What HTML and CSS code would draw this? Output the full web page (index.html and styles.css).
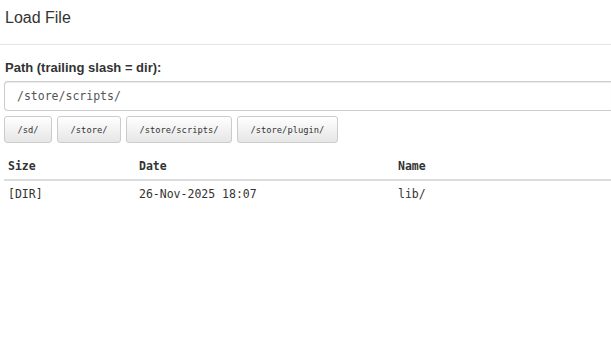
FILE: index.html
```html
<!DOCTYPE html>
<html>
<head>
  <title>Load File</title>
  <link rel="stylesheet" href="styles.css">
</head>
<body>
  <div class="modal">
    <div class="modal-header">
      <h4 class="modal-title">Load File</h4>
    </div>

    <div class="modal-body">
      <label for="filePath" class="path-label">Path (trailing slash = dir):</label>
      <input type="text" id="filePath" class="path-input" value="/store/scripts/">

      <div class="shortcuts">
        <button type="button" class="shortcut">/sd/</button>
        <button type="button" class="shortcut">/store/</button>
        <button type="button" class="shortcut">/store/scripts/</button>
        <button type="button" class="shortcut">/store/plugin/</button>
      </div>

      <table class="file-table">
        <thead>
          <tr>
            <th class="col-size">Size</th>
            <th class="col-date">Date</th>
            <th>Name</th>
          </tr>
        </thead>
        <tbody>
          <tr>
            <td>[DIR]</td>
            <td>26-Nov-2025 18:07</td>
            <td>lib/</td>
          </tr>
        </tbody>
      </table>
    </div>
  </div>
</body>
</html>
```

FILE: styles.css
```css
html, body {
  overflow: hidden;
}

body {
  margin: 0;
  font-family: "Liberation Sans", Arial, sans-serif;
  color: #333;
  background-color: #fff;
}

.modal {
  width: 100%;
}

.modal-header {
  padding: 6px 5px 14px;
  border-bottom: 1px solid #e5e5e5;
}

.modal-title {
  margin: 0;
  font-size: 16px;
  line-height: 24px;
  font-weight: normal;
}

.modal-body {
  padding: 0 0 0 4px;
}

.path-label {
  display: block;
  margin-top: 14px;
  margin-bottom: 4px;
  font-size: 13px;
  line-height: 18px;
  font-weight: bold;
  padding-left: 1px;
}

.path-input {
  display: block;
  box-sizing: border-box;
  width: 100%;
  height: 30px;
  padding: 0 12px;
  border: 1px solid #ccc;
  border-right: none;
  border-radius: 4px 0 0 4px;
  box-shadow: inset 0 1px 1px rgba(0, 0, 0, 0.075);
  font-family: "DejaVu Sans Mono", monospace;
  font-size: 11.5px;
  color: #555;
}

.shortcuts {
  display: flex;
  gap: 5px;
  margin-top: 5px;
}

.shortcut {
  height: 27px;
  padding: 0 12.5px;
  border: 1px solid #ccc;
  border-radius: 3px;
  background: linear-gradient(#fff, #e6e6e6);
  font-family: "DejaVu Sans Mono", monospace;
  font-size: 8.75px;
  color: #333;
  cursor: pointer;
}

.file-table {
  width: 100%;
  margin-top: 10px;
  border-collapse: collapse;
  font-family: "DejaVu Sans Mono", monospace;
  font-size: 11.5px;
  line-height: 16px;
}

.file-table th,
.file-table td {
  padding: 5px 4px;
  text-align: left;
}

.file-table th {
  font-weight: bold;
  border-bottom: 2px solid #ddd;
}

.col-size {
  width: 123px;
}

.col-date {
  width: 251px;
}
```
